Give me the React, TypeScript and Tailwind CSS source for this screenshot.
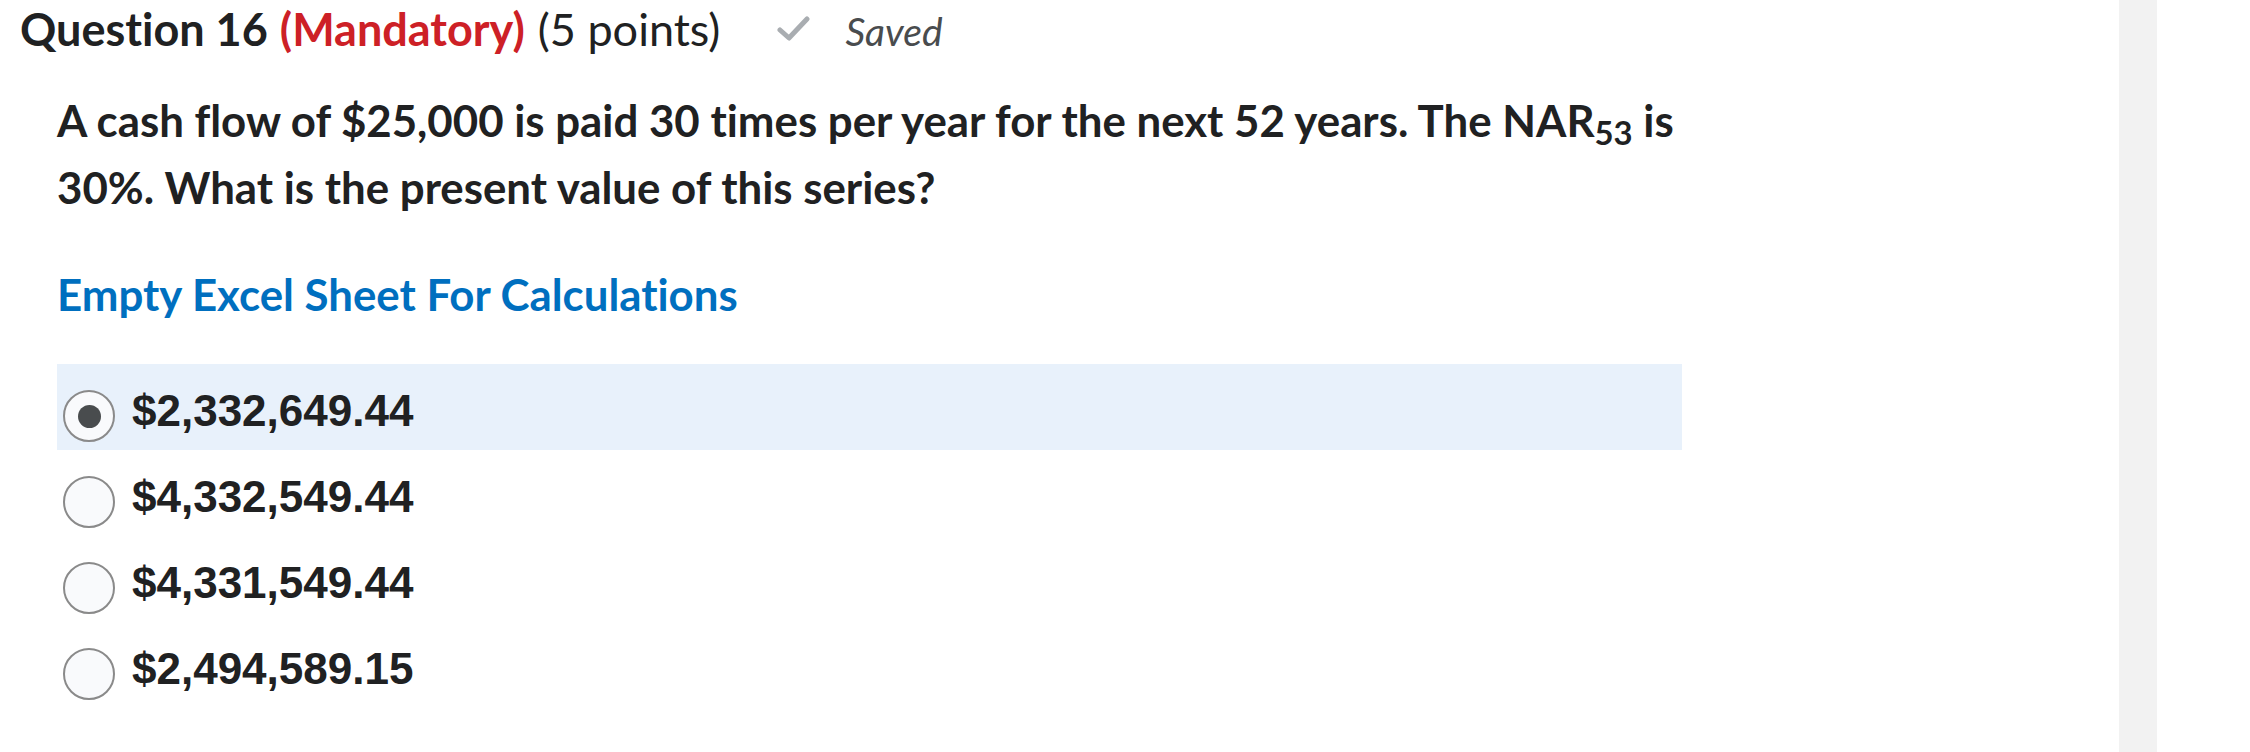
import React from "react";

const lato = { fontFamily: "Lato, 'Noto Sans', sans-serif" };

function Radio({ checked }: { checked?: boolean }) {
  return (
    <div className="mt-[10px] flex h-[52px] w-[52px] shrink-0 items-center justify-center rounded-full border-2 border-[#8a8a8a] bg-[#f9fafc]">
      {checked ? <div className="h-[23px] w-[23px] rounded-full bg-[#494c4e]" /> : null}
    </div>
  );
}

function Option({ label, checked }: { label: string; checked?: boolean }) {
  return (
    <div className={`flex h-[86px] items-center gap-[17px] pl-[6px] pt-[8px] ${checked ? "bg-[#e8f1fb]" : ""}`}>
      <Radio checked={checked} />
      <span className="font-['Liberation_Sans',Arial,sans-serif] text-[44px] font-bold leading-none text-[#202122]">{label}</span>
    </div>
  );
}

export default function App() {
  return (
    <div className="flex h-[752px] w-[2250px] bg-white [font-variant-ligatures:none]" style={lato}>
      <div className="w-[2119px] shrink-0">
        <div className="flex items-baseline whitespace-nowrap pl-[20px] pt-[2px] text-[45px] leading-[1.2] text-[#202122]">
          <span className="font-bold">Question 16</span>
          <span className="ml-[12px] font-bold text-[#cd2026]">(Mandatory)</span>
          <span className="ml-[13px] font-normal">(5 points)</span>
          <svg className="ml-[57px] self-center" width="34" height="28" viewBox="0 0 34 28">
            <polyline points="3,15 12,23 30,4" fill="none" stroke="#a9adb1" strokeWidth="5" strokeLinecap="round" strokeLinejoin="round" />
          </svg>
          <span className="ml-[34px] text-[39px] italic text-[#494c4e]">Saved</span>
        </div>
        <div className="ml-[57px] w-[1625px]">
          <p className="mt-[31px] text-[43.8px] font-bold leading-[67px] text-[#202122]">
            <span className="block whitespace-nowrap">
              A cash flow of $25,000 is paid 30 times per year for the next 52 years. The NAR<sub>53</sub> is
            </span>
            <span className="block whitespace-nowrap">30%. What is the present value of this series?</span>
          </p>
          <div className="mt-[40px] text-[43.8px] font-bold leading-[67px] text-[#006fbf]">Empty Excel Sheet For Calculations</div>
          <div className="mt-[36px] flex flex-col">
            <Option label="$2,332,649.44" checked />
            <Option label="$4,332,549.44" />
            <Option label="$4,331,549.44" />
            <Option label="$2,494,589.15" />
          </div>
        </div>
      </div>
      <div className="h-full w-[38px] shrink-0 bg-[#f2f2f2]" />
      <div className="flex-1 bg-white" />
    </div>
  );
}
